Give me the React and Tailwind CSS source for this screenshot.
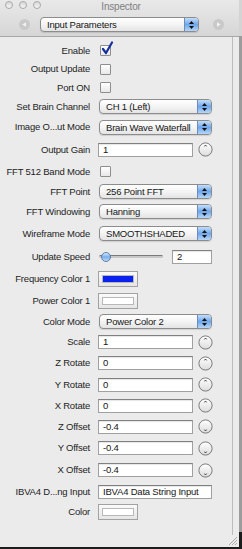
import React from 'react';

const rows = [
  { label: 'Enable', h: 19, type: 'check', checked: true },
  { label: 'Output Update', h: 18, type: 'check' },
  { label: 'Port ON', h: 19, type: 'check' },
  { label: 'Set Brain Channel', h: 19, type: 'popup', value: 'CH 1 (Left)' },
  { label: 'Image O...ut Mode', h: 22, type: 'popup', value: 'Brain Wave Waterfall' },
  { label: 'Output Gain', h: 23, type: 'knob', value: '1', mark: 'top' },
  { label: 'FFT 512 Band Mode', h: 21, type: 'check' },
  { label: 'FFT Point', h: 19, type: 'popup', value: '256 Point FFT' },
  { label: 'FFT Windowing', h: 21, type: 'popup', value: 'Hanning' },
  { label: 'Wireframe Mode', h: 23, type: 'popup', value: 'SMOOTHSHADED' },
  { label: 'Update Speed', h: 23, type: 'slider', value: '2' },
  { label: 'Frequency Color 1', h: 22, type: 'color', color: '#0b22ee' },
  { label: 'Power Color 1', h: 21, type: 'color', color: '#ffffff' },
  { label: 'Color Mode', h: 21, type: 'popup', value: 'Power Color 2' },
  { label: 'Scale', h: 20, type: 'knob', value: '1', mark: 'top' },
  { label: 'Z Rotate', h: 22, type: 'knob', value: '0', mark: 'top' },
  { label: 'Y Rotate', h: 21, type: 'knob', value: '0', mark: 'top' },
  { label: 'X Rotate', h: 21, type: 'knob', value: '0', mark: 'top' },
  { label: 'Z Offset', h: 21, type: 'knob', value: '-0.4', mark: 'bottom' },
  { label: 'Y Offset', h: 22, type: 'knob', value: '-0.4', mark: 'bottom' },
  { label: 'X Offset', h: 22, type: 'knob', value: '-0.4', mark: 'bottom' },
  { label: 'IBVA4 D...ng Input', h: 21, type: 'text', value: 'IBVA4 Data String Input' },
  { label: 'Color', h: 19, type: 'color', color: '#ffffff' },
];

function Arrows() {
  return (
    <svg width="7" height="10" viewBox="0 0 7 10">
      <path d="M3.5 1 L6 4 L1 4 Z" fill="#111" />
      <path d="M3.5 9 L6 6 L1 6 Z" fill="#111" />
    </svg>
  );
}

function Popup({ value, wide }) {
  return (
    <div
      className={`flex h-[15px] overflow-hidden rounded-[4px] border border-[#8c8c8c] bg-linear-to-b from-white via-[#f4f4f4] to-[#e4e4e4] shadow-[0_1px_1px_rgba(0,0,0,0.12)] ${
        wide ? 'w-[159px]' : 'w-[113px]'
      }`}
    >
      <span className="flex-1 pl-[6px] text-[9.5px] leading-[13px] text-[#161616] whitespace-nowrap">{value}</span>
      <span className="flex w-[14px] items-center justify-center border-l border-[#6d8cbc] bg-linear-to-b from-[#c4defa] via-[#6ea6ea] to-[#b6d6f8]">
        <Arrows />
      </span>
    </div>
  );
}

function Field({ value, w = 'w-[95px]' }) {
  return (
    <div
      className={`${w} h-[14px] border border-[#a0a0a0] border-t-[#808080] bg-white pl-[4px] text-[9.5px] leading-[12px] text-[#161616] whitespace-nowrap overflow-hidden shadow-[inset_0_1px_1px_rgba(0,0,0,0.1)]`}
    >
      {value}
    </div>
  );
}

function Knob({ mark }) {
  return (
    <svg width="15" height="15" viewBox="0 0 15 15" className="ml-[5px]">
      <defs>
        <linearGradient id="kg" x1="0" y1="0" x2="0" y2="1">
          <stop offset="0" stopColor="#ffffff" />
          <stop offset="1" stopColor="#dcdcdc" />
        </linearGradient>
      </defs>
      <circle cx="7.5" cy="7.5" r="6.6" fill="url(#kg)" stroke="#6f6f6f" strokeWidth="0.9" />
      {mark === 'top' ? (
        <path d="M6.4 4.4 L7.5 3 L8.6 4.4" fill="none" stroke="#333" strokeWidth="0.9" />
      ) : (
        <path d="M6.4 10.6 L7.5 12 L8.6 10.6" fill="none" stroke="#333" strokeWidth="0.9" />
      )}
    </svg>
  );
}

function Check({ checked }) {
  return (
    <div className="relative ml-[2px] h-[11px] w-[11px] rounded-[1px] border border-[#8e8e8e] bg-linear-to-b from-white to-[#e8e8e8]">
      {checked && (
        <svg width="13" height="14" viewBox="0 0 13 14" className="absolute left-[0px] top-[-5px]">
          <path d="M2 8 L5 12 L11 1.5" fill="none" stroke="#16309e" strokeWidth="2.2" strokeLinecap="round" strokeLinejoin="round" />
        </svg>
      )}
    </div>
  );
}

function ColorWell({ color }) {
  return (
    <div className="flex h-[16px] w-[40px] items-center justify-center border border-[#a2a2a2] bg-linear-to-b from-[#fafafa] to-[#e6e6e6]">
      <div className="h-[8px] w-[32px] border border-[#b8b8b8]" style={{ backgroundColor: color }} />
    </div>
  );
}

function Slider({ value }) {
  return (
    <div className="flex items-center">
      <div className="relative ml-[1px] flex h-[10px] w-[64px] items-center">
        <div className="h-[3px] w-full rounded-full border-t border-[#7a7a7a] bg-[#c8c8c8]" />
        <div className="absolute left-[2px] top-[0px] h-[10px] w-[10px] rounded-full border border-[#5b7fae] bg-linear-to-b from-[#d7e9fb] via-[#78aee8] to-[#c0dbf7]" />
      </div>
      <div className="ml-[9px]">
        <Field value={value} w="w-[40px]" />
      </div>
    </div>
  );
}

function Control({ row }) {
  switch (row.type) {
    case 'check':
      return <Check checked={row.checked} />;
    case 'popup':
      return <div className="pl-[1px]"><Popup value={row.value} /></div>;
    case 'knob':
      return (
        <div className="flex items-center">
          <Field value={row.value} />
          <Knob mark={row.mark} />
        </div>
      );
    case 'slider':
      return <Slider value={row.value} />;
    case 'color':
      return <ColorWell color={row.color} />;
    case 'text':
      return <Field value={row.value} w="w-[114px]" />;
    default:
      return null;
  }
}

function NavCircle({ dir }) {
  return (
    <svg width="11" height="11" viewBox="0 0 11 11">
      <circle cx="5.5" cy="5.5" r="5.5" fill="#c9c9c9" />
      {dir === 'left' ? (
        <path d="M3.3 5.5 L7 3.3 L7 7.7 Z" fill="#f2f2f2" />
      ) : (
        <path d="M7.7 5.5 L4 3.3 L4 7.7 Z" fill="#f2f2f2" />
      )}
    </svg>
  );
}

export default function App() {
  return (
    <div className="flex h-[549px] w-[242px] flex-col overflow-hidden bg-[#1c1c1c] font-['Liberation_Sans',Arial,sans-serif] tracking-[-0.2px]">
      <div className="flex h-[547px]">
        <div className="flex w-[239px] flex-col bg-[#ebebeb]">
          {/* title + toolbar */}
          <div className="h-[37px] border-b border-[#a8a8a8] bg-linear-to-b from-[#e9e9e9] to-[#d6d6d6]">
            <div className="relative h-[13px]">
              <div className="absolute left-[5px] top-[1px] flex gap-[6px]">
                <div className="h-[8px] w-[8px] rounded-full border border-[#a9a9a9] bg-linear-to-b from-[#d9d9d9] to-[#f3f3f3]" />
                <div className="h-[8px] w-[8px] rounded-full border border-[#a9a9a9] bg-linear-to-b from-[#d9d9d9] to-[#f3f3f3]" />
                <div className="h-[8px] w-[8px] rounded-full border border-[#a9a9a9] bg-linear-to-b from-[#d9d9d9] to-[#f3f3f3]" />
              </div>
              <div className="pl-[3px] text-center text-[10px] leading-[13px] text-[#808080]">Inspector</div>
            </div>
            <div className="mt-[4px] flex items-center">
              <div className="ml-[19px] flex">
                <NavCircle dir="left" />
              </div>
              <div className="ml-[10px]">
                <Popup value="Input Parameters" wide />
              </div>
              <div className="ml-[14px] flex">
                <NavCircle dir="right" />
              </div>
            </div>
          </div>

          {/* parameters */}
          <div className="flex h-[498px]">
            <div className="w-[233px] border-r border-[#bcbcbc] pt-[4px]">
              {rows.map((row) => (
                <div key={row.label} className="grid grid-cols-[90px_1fr] items-center gap-x-[8px]" style={{ height: row.h }}>
                  <div className="text-right text-[9.5px] leading-[12px] text-[#1e1e1e] whitespace-nowrap">{row.label}</div>
                  <div className="flex items-center">
                    <Control row={row} />
                  </div>
                </div>
              ))}
            </div>
          </div>

          {/* bottom with resize grip */}
          <div className="flex flex-1 items-end justify-end pr-[1px] pb-[1px]">
            <svg width="10" height="10" viewBox="0 0 10 10">
              <path d="M9 1 L1 9 M9 4 L4 9 M9 7 L7 9" stroke="#9a9a9a" strokeWidth="0.8" />
            </svg>
          </div>
        </div>
        <div className="flex flex-1 flex-col">
          <div className="h-[36px] bg-[#d4d4d4]" />
          <div className="h-[496px] bg-[#9c9c9c]" />
          <div className="flex-1 bg-[#1c1c1c]" />
        </div>
      </div>
    </div>
  );
}
